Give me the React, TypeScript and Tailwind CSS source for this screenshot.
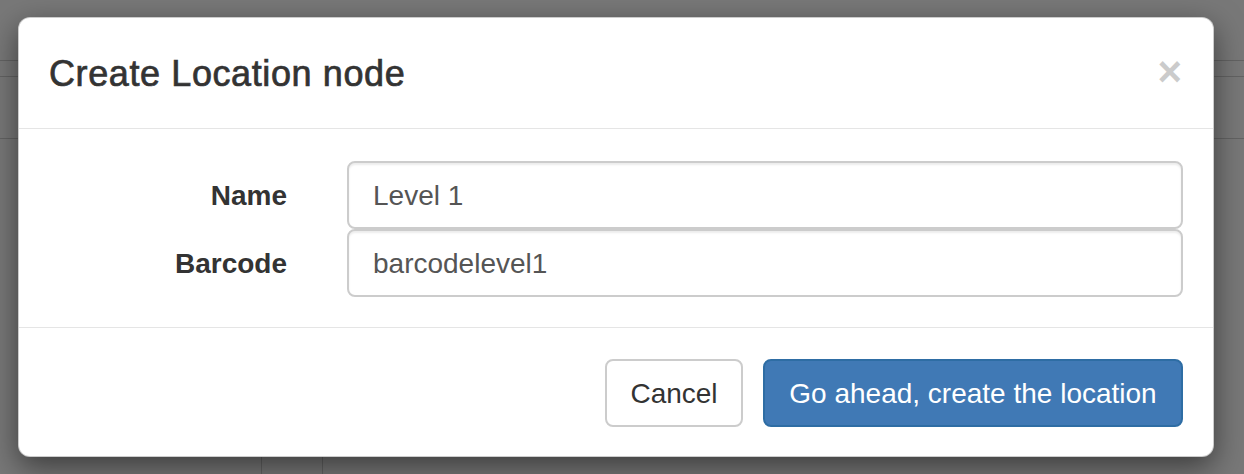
import React from 'react';

const Field: React.FC<{ label: string; value: string }> = ({ label, value }) => (
  <>
    <label className="pt-[15px] text-right text-[28px] font-bold leading-[40px] text-[#333]">{label}</label>
    <input
      readOnly
      value={value}
      className="h-[68px] w-full rounded-[8px] border-2 border-[#ccc] bg-white px-[24px] pb-[11px] pt-[13px] text-[28px] leading-[40px] text-[#555] shadow-[inset_0_2px_2px_rgba(0,0,0,0.075)] outline-none"
    />
  </>
);

export default function App() {
  return (
    <div className="relative h-[474px] w-[1244px] overflow-hidden bg-white font-['Liberation_Sans',Arial,sans-serif]">
      {/* page behind the backdrop */}
      <div className="h-[61px] border-b border-[#d2d2d2]" />
      <div className="h-[16px] border-b border-[#d2d2d2]" />
      <div className="h-[62px] border-b border-[#d2d2d2]" />
      <div className="flex h-[400px] pl-[261px]">
        <div className="w-[62px] border-x border-[#d2d2d2]" />
      </div>

      {/* backdrop */}
      <div className="absolute inset-0 bg-black/[0.53]" />

      {/* modal */}
      <div className="absolute left-[18px] top-[17px] w-[1196px] rounded-[12px] border border-black/20 bg-white shadow-[0_10px_30px_rgba(0,0,0,0.5)]">
        <div className="flex items-start justify-between border-b border-[#e5e5e5] p-[30px] pb-[29px]">
          <h4 className="text-[36px] font-normal leading-[51px] tracking-[0.6px] text-[#333] [-webkit-text-stroke:0.7px_#333]">
            Create Location node
          </h4>
          <button className="mr-[1px] mt-[3px] text-[42px] font-bold leading-none text-black opacity-20">×</button>
        </div>

        <div className="grid grid-cols-[238px_1fr] gap-x-[60px] px-[30px] pb-[30px] pt-[32px]">
          <Field label="Name" value="Level 1" />
          <Field label="Barcode" value="barcodelevel1" />
        </div>

        <div className="flex justify-end gap-[20px] border-t border-[#e5e5e5] px-[30px] pb-[29px] pt-[31px]">
          <button className="h-[68px] w-[138px] rounded-[8px] border-2 border-[#ccc] bg-white pt-[2px] text-center text-[28px] leading-[40px] text-[#333]">
            Cancel
          </button>
          <button className="h-[68px] w-[420px] rounded-[8px] border-2 border-[#2e6da4] bg-[#4079b5] pt-[2px] text-center text-[28px] leading-[40px] text-white">
            Go ahead, create the location
          </button>
        </div>
      </div>
    </div>
  );
}
